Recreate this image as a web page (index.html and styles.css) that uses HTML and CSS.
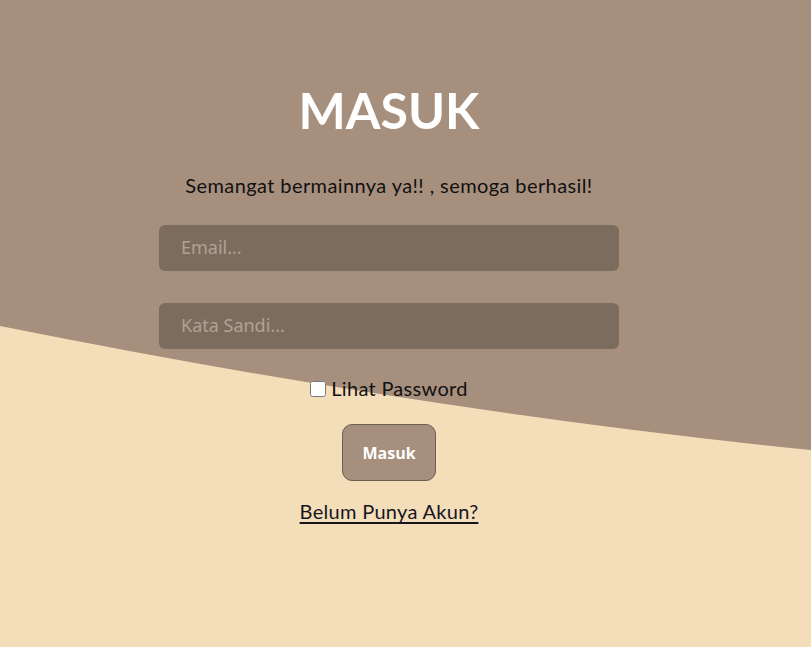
FILE: index.html
```html
<!DOCTYPE html>
<html lang="id">
<head>
<meta charset="utf-8">
<title>Masuk</title>
<link rel="stylesheet" href="styles.css">
</head>
<body>
<svg class="wave" width="811" height="647" viewBox="0 0 811 647" preserveAspectRatio="none" aria-hidden="true">
  <path d="M0 0 H811 V450 Q429 411.8 0 326 Z" fill="#a78f7d"/>
</svg>
<main class="login">
  <h1 class="title">MASUK</h1>
  <p class="subtitle">Semangat bermainnya ya!! , semoga berhasil!</p>
  <form class="form">
    <input class="field" type="email" placeholder="Email...">
    <input class="field" type="password" placeholder="Kata Sandi...">
    <label class="show"><input class="check" type="checkbox">Lihat Password</label>
    <button class="btn" type="button">Masuk</button>
    <a class="link" href="#">Belum Punya Akun?</a>
  </form>
</main>
</body>
</html>
```

FILE: styles.css
```css
html, body {
  margin: 0;
  padding: 0;
  height: 100%;
}
body {
  background: #f4deba;
  position: relative;
  overflow: hidden;
  font-family: "Lato", "Liberation Sans", sans-serif;
}
.wave {
  position: absolute;
  left: 0;
  top: 0;
  display: block;
}
.login {
  position: relative;
  display: flex;
  flex-direction: column;
  align-items: center;
  padding: 80px 33px 0 0;
}
.title {
  margin: 0;
  font-size: 50px;
  line-height: 60px;
  font-weight: 700;
  color: #ffffff;
  letter-spacing: 0;
}
.subtitle {
  margin: 33px 0 0;
  font-size: 20px;
  line-height: 24px;
  color: #111;
  letter-spacing: 0.4px;
}
.form {
  margin-top: 28px;
  display: flex;
  flex-direction: column;
  align-items: center;
}
.field {
  box-sizing: border-box;
  width: 460px;
  height: 46px;
  border: none;
  border-radius: 6px;
  background: #7b6c5e;
  padding: 0 22px 2px;
  font-family: "Noto Sans", "Open Sans", sans-serif;
  font-size: 18px;
  color: #eee;
  outline: none;
}
.field + .field {
  margin-top: 32px;
}
.field::placeholder {
  color: #b0a294;
}
.show {
  margin-top: 27px;
  display: flex;
  align-items: center;
  font-size: 20px;
  line-height: 24px;
  color: #111;
  letter-spacing: 0.3px;
}
.check {
  width: 16px;
  height: 16px;
  margin: 2px 5px 0 0;
}
.btn {
  margin-top: 24px;
  width: 94px;
  height: 57px;
  border: 1px solid #6b5e52;
  border-radius: 10px;
  background: #a78f7d;
  color: #fff;
  font-family: "Open Sans", "Noto Sans", sans-serif;
  font-weight: 700;
  font-size: 16px;
}
.link {
  margin-top: 18px;
  font-size: 20px;
  line-height: 24px;
  color: #16161f;
  letter-spacing: 0.3px;
  text-decoration: underline;
  text-underline-offset: 3px;
}
```
